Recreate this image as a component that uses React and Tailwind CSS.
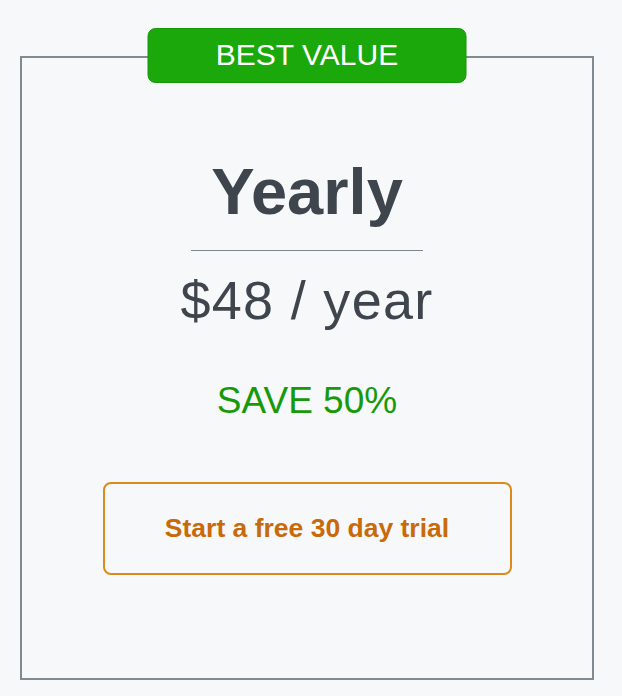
export default function App() {
  return (
    <div className="min-h-[696px] w-full bg-[#f6f8fa] pl-5 pt-14 font-['Liberation_Sans',Arial,sans-serif]">
      <div className="relative flex h-[624px] w-[574px] flex-col items-center border-2 border-[#7f8a91] pt-[101px]">
        {/* Badge */}
        <div className="absolute left-1/2 top-[-30px] flex h-[55px] w-[319px] -translate-x-1/2 items-center justify-center rounded-lg border border-[#149609] bg-[#1ba80b] pb-px text-[30px] leading-none text-white">
          BEST VALUE
        </div>

        <h1 className="text-[65px] font-bold leading-[65px] text-[#3e454c]">Yearly</h1>

        <div className="mt-[26px] h-px w-[232px] bg-[#7e878e]" />

        <p className="mt-[22px] text-[54px] leading-[54px] tracking-[1.3px] text-[#3e454c]">$48 / year</p>

        <p className="mt-[55px] text-[37px] leading-[37px] text-[#179a0a]">SAVE 50%</p>

        <button className="mt-[63px] flex h-[93px] w-[409px] items-center justify-center rounded-lg border-2 border-[#dc8a1c] text-[26.5px] font-bold text-[#c96a0a]">
          Start a free 30 day trial
        </button>
      </div>
    </div>
  )
}
